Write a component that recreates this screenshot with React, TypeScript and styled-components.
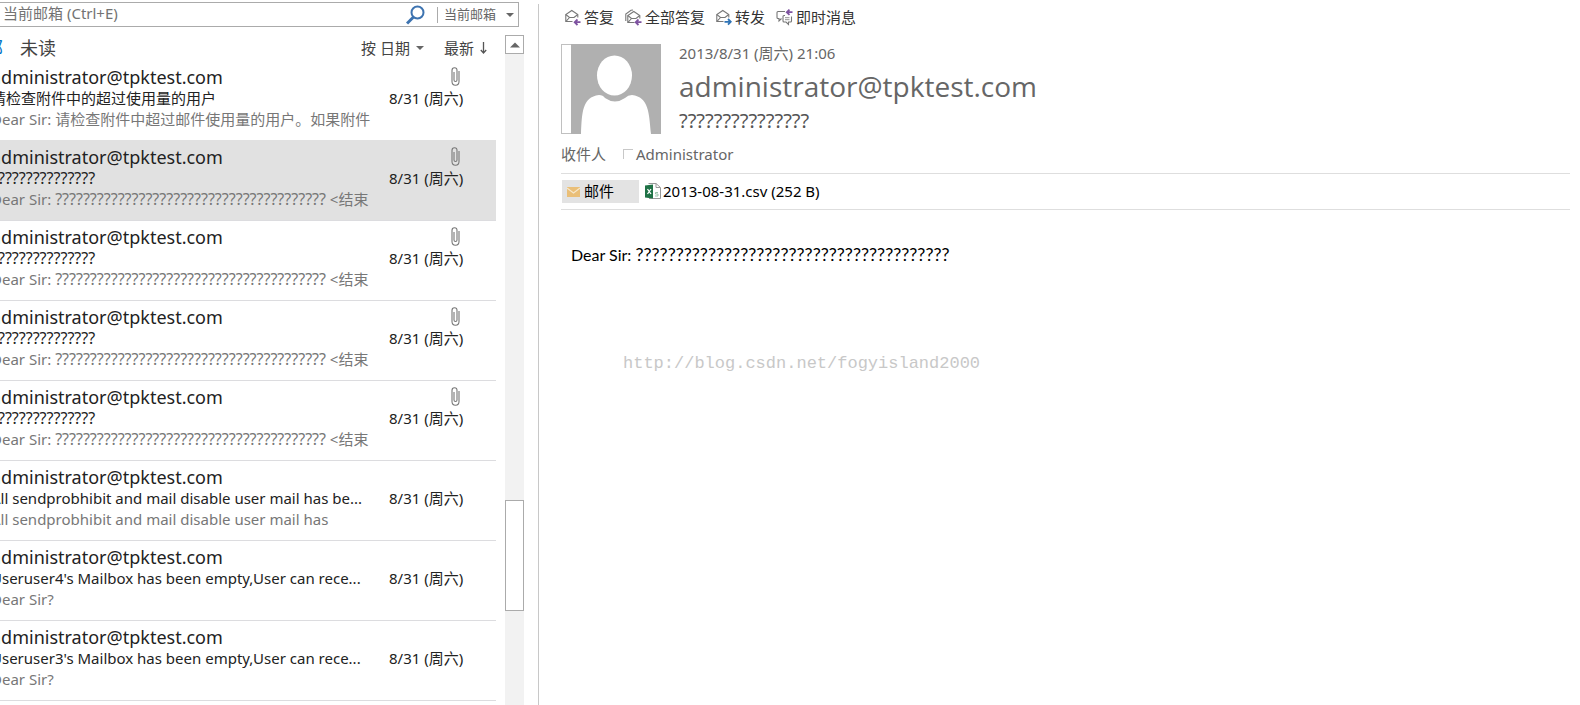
import React from "react";
import styled, { createGlobalStyle } from "styled-components";

const Global = createGlobalStyle`
  * { box-sizing: border-box; }
  html, body, #root { height: 100%; }
  body {
    margin: 0;
    background: #fff;
    color: #222;
    font: 15px/21px "Noto Sans", "Noto Sans CJK SC", sans-serif;
  }
  button, input, select { font: inherit; color: inherit; margin: 0; }
`;

const Page = styled.div`
  display: grid;
  grid-template-columns: 538px 1fr;
  height: 100vh;
  overflow: hidden;
`;

const ListPane = styled.section`
  display: flex;
  flex-direction: column;
  min-width: 0;
  min-height: 0;
`;

const SearchBar = styled.form`
  display: flex;
  align-items: center;
  height: 25px;
  margin: 2px 19px 0 0;
  border: 1px solid #ababab;
  border-left: 0;
`;

const SearchInput = styled.input`
  flex: 1;
  min-width: 0;
  height: 23px;
  padding: 0 0 4px 3px;
  border: 0;
  outline: 0;
  background: none;
  font-size: 15px;
  &::placeholder { color: #737373; opacity: 1; }
`;

const PlainButton = styled.button`
  display: flex;
  align-items: center;
  padding: 0;
  border: 0;
  background: none;
  white-space: nowrap;
`;

const Scope = styled.label`
  display: flex;
  align-items: center;
  margin-left: 12px;
  padding: 0 4px 0 6px;
  border-left: 1px solid #ababab;
  line-height: 16px;
  color: #666;
`;

const ScopeSelect = styled.select`
  appearance: none;
  width: 62px;
  height: 16px;
  padding: 0 0 2px;
  border: 0;
  background: none;
  font-size: 13px;
  line-height: 14px;
`;

const ListBody = styled.div`
  display: flex;
  flex: 1;
  min-height: 0;
  margin-top: 8px;
`;

const ListColumn = styled.div`
  flex: 1;
  min-width: 0;
`;

const Filters = styled.div`
  display: flex;
  align-items: center;
  height: 26px;
  padding-right: 18px;
  color: #444;
`;

const FilterTab = styled.button<{ $active?: boolean }>`
  padding: 0;
  border: 0;
  background: none;
  font-size: 18px;
  white-space: nowrap;
  color: ${(p) => (p.$active ? "#0072c6" : "#444")};
  margin-left: ${(p) => (p.$active ? "-33px" : "17px")};
`;

const SortGroup = styled.div`
  display: flex;
  gap: 20px;
  margin-left: auto;
  svg { margin-left: 6px; }
`;

const Messages = styled.ul`
  margin: 0 9px 0 0;
  padding: 0;
  list-style: none;
`;

const Message = styled.li<{ $selected?: boolean }>`
  display: grid;
  grid-template-columns: 389px 1fr;
  height: 80px;
  padding-top: 5px;
  border-top: 1px solid ${(p) => (p.$selected ? "#e1e1e1" : "#dcdcdf")};
  background: ${(p) => (p.$selected ? "#e1e1e1" : "#fff")};
  &:first-child { height: 79px; padding-top: 4px; border-color: transparent; }
  &:last-child { height: 81px; border-bottom: 1px solid #dcdcdf; }
`;

const MessageText = styled.div`
  width: 389px;
  padding-right: 14px;
  overflow: hidden;
`;

const Line = styled.div<{ $kind: "sender" | "subject" | "preview" }>`
  margin-left: -9px;
  font-size: ${(p) => (p.$kind === "sender" ? "18px" : "15px")};
  line-height: ${(p) => (p.$kind === "sender" ? "22px" : "21px")};
  color: ${(p) => (p.$kind === "preview" ? "#777" : "#222")};
  white-space: nowrap;
`;

const Marks = styled.span<{ $size: number }>`
  font-size: ${(p) => p.$size}px;
`;

const MessageMeta = styled.div`
  display: grid;
  grid-template-rows: 22px 21px;
  width: 77px;
  white-space: nowrap;
  svg { justify-self: end; margin: 1px 6px 0 0; }
  time { grid-row: 2; }
`;

const Scroll = styled.div`
  display: flex;
  flex-direction: column;
  width: 19px;
  margin-right: 14px;
  background: #f2f2f2;
`;

const ScrollButton = styled.button`
  display: flex;
  align-items: center;
  justify-content: center;
  height: 19px;
  padding: 0;
  border: 1px solid #ababab;
  background: #fff;
`;

const ScrollTrack = styled.div`
  flex: 1;
  display: grid;
  grid-template-rows: 446fr 111fr 94fr;
`;

const Thumb = styled.div`
  grid-row: 2;
  border: 1px solid #ababab;
  background: #fff;
`;

const Reading = styled.main`
  min-width: 0;
  margin-top: 4px;
  padding: 3px 10px 0 22px;
  border-left: 1px solid #c8c8c8;
`;

const Actions = styled.nav`
  display: flex;
  gap: 11px;
  height: 21px;
  padding-left: 4px;
  color: #333;
  svg { margin-right: 3px; }
`;

const Header = styled.header`
  display: flex;
  gap: 18px;
  height: 90px;
  margin-top: 16px;
  color: #666;
`;

const Avatar = styled.div`
  width: 100px;
  height: 90px;
  padding-left: 9px;
  border: 1px solid #c0c0c0;
  border-right: 0;
  svg { display: block; margin-top: -1px; }
`;

const HeaderText = styled.div`
  min-width: 0;
  time { display: block; line-height: 19px; }
`;

const From = styled.h1`
  margin: 3px 0 0;
  font-family: "Open Sans", sans-serif;
  font-size: 28px;
  font-weight: 400;
  line-height: 40px;
`;

const Subject = styled.h2`
  margin: 3px 0 0;
  font-size: 20px;
  font-weight: 400;
  line-height: 24px;
  color: #555;
`;

const Recipients = styled.div`
  display: flex;
  gap: 17px;
  height: 39px;
  padding-top: 10px;
  color: #666;
`;

const Recipient = styled.span`
  display: flex;
  gap: 3px;
`;

const Presence = styled.i`
  width: 10px;
  height: 10px;
  margin-top: 5px;
  border: 1px solid #c8c8c8;
  border-right: 0;
  border-bottom: 0;
`;

const Attachments = styled.div`
  display: flex;
  align-items: center;
  gap: 6px;
  height: 37px;
  padding-left: 1px;
  border: 1px solid #dedede;
  border-width: 1px 0;
  color: #000;
`;

const AttachmentTab = styled(PlainButton)<{ $active?: boolean }>`
  gap: ${(p) => (p.$active ? "4px" : "2px")};
  width: ${(p) => (p.$active ? "77px" : "auto")};
  height: 23px;
  padding-left: ${(p) => (p.$active ? "5px" : "0")};
  background: ${(p) => (p.$active ? "#e3e3e3" : "none")};
`;

const Body = styled.article`
  padding: 34px 10px 0;
  color: #000;
`;

const BodyText = styled.p`
  margin: 0;
  font-family: Lato, "Noto Sans CJK SC", sans-serif;
  font-size: 16px;
`;

const Watermark = styled.p`
  margin: 87px 0 0 52px;
  font-family: "Liberation Mono", monospace;
  font-size: 17px;
  line-height: 24px;
  color: #c8c8c8;
`;

const Caret = ({ up }: { up?: boolean }) => (
  <svg width={up ? 10 : 8} height={up ? 6 : 4} viewBox="0 0 8 4" aria-hidden="true">
    <path d={up ? "M0 4L4 0L8 4Z" : "M0 0H8L4 4Z"} fill="#666" />
  </svg>
);

const SearchIcon = () => (
  <svg width="19" height="20" viewBox="0 0 19 20" fill="none" stroke="#3d73b0" aria-hidden="true">
    <circle cx="11.5" cy="7.5" r="6" strokeWidth="2" />
    <path d="M7.5 12L1 18.5" strokeWidth="3" />
  </svg>
);

const DownArrow = () => (
  <svg width="7" height="12" viewBox="0 0 7 12" fill="none" stroke="#555" aria-hidden="true">
    <path d="M3.5 0V11M.8 8L3.5 11L6.2 8" strokeWidth="1.3" />
  </svg>
);

const Clip = () => (
  <svg width="9" height="19" viewBox="0 0 9 19" fill="none" stroke="#777" strokeWidth="1.1" aria-hidden="true">
    <path d="M3 5V13Q3 14.500 4.500 14.500T6 13V3.500Q6 .8 3.500 .8T1 3.500V14.500Q1 18.200 4.500 18.200T8 14.500V4" />
  </svg>
);

type IconKind = "reply" | "replyAll" | "forward" | "im";

const ActionIcon = ({ kind }: { kind: IconKind }) => {
  const wide = kind === "replyAll" || kind === "im";
  return (
    <svg width={wide ? 17 : 16} height="17" viewBox={wide ? "0 0 17 17" : "0 0 16 17"} fill="none" aria-hidden="true">
      {kind === "im" ? (
        <>
          <path d="M9 2.500H2Q1 2.500 1 3.500V8.500Q1 9.500 2 9.500H3V12L5.500 9.500" stroke="#777" strokeWidth="1.1" />
          <path d="M9 6.500H8Q7 6.500 7 7.500V12Q7 13 8 13H10L12.500 15.500V13H14.500Q15.500 13 15.500 12V7.500" stroke="#777" strokeWidth="1.1" />
          <path d="M9 8.700H13.500M9 10.700H13.500" stroke="#888" strokeWidth=".9" />
          <path d="M16.500 3.200H11M13.500 .6L10.800 3.200L13.500 5.800" stroke="#7e52a0" strokeWidth="1.8" />
        </>
      ) : (
        <>
          {kind === "replyAll" && <path d="M.8 12V5L6 1.200L8 1" stroke="#777" strokeWidth="1.1" />}
          <g transform={kind === "replyAll" ? "translate(2 1)" : undefined} stroke="#777" strokeWidth="1.1">
            <path d="M7.500 12.500H.8V5.500L6.800 1.500L12.800 5.500V8.500" />
            <path d="M.8 5.500L4.500 8.500H9L12.800 5.500M1 12.300L4.500 8.500" />
          </g>
          {kind === "forward" ? (
            <path d="M8.500 12.800H14.500M12 10L14.800 12.800L12 15.600" stroke="#2f73b5" strokeWidth="1.8" />
          ) : (
            <path d={kind === "replyAll" ? "M16.500 13.200H11M13.500 10.500L10.700 13.200L13.500 16" : "M15.500 13.200H10M12.500 10.500L9.700 13.200L12.500 16"} stroke="#7e52a0" strokeWidth="1.8" />
          )}
        </>
      )}
    </svg>
  );
};

const Person = () => (
  <svg width="90" height="90" viewBox="0 0 90 90" aria-label="发件人头像" role="img">
    <path d="M0 0H90V90H0Z" fill="#b0b0b0" />
    <ellipse cx="43.500" cy="31.500" rx="17.500" ry="20" fill="#fff" />
    <path d="M10 90C11 69 11 53 28 51Q32 51 34 54Q44 61 54 54Q57 51 61 51C78 53 78 69 80 90Z" fill="#fff" />
  </svg>
);

const Envelope = () => (
  <svg width="13" height="10" viewBox="0 0 13 10" aria-hidden="true">
    <path d="M0 0H13V10H0Z" fill="#eabf78" />
    <path d="M0 1L6.500 6L13 1" fill="none" stroke="#f7e8cc" strokeWidth="1.2" />
  </svg>
);

const Excel = () => (
  <svg width="16" height="17" viewBox="0 0 16 17" fill="none" aria-hidden="true">
    <path d="M3.500 .5H11L15.500 4.500V15.500H4M11 .5V4.500H15" stroke="#999" />
    <path d="M0 2.500L8 1.500V15.500L0 14.500Z" fill="#1f7246" />
    <path d="M2.500 6L6 11M6 6L2.500 11" stroke="#fff" strokeWidth="1.3" />
    <path d="M13 9.500H10.500V11H13V13H10" stroke="#9bc3ab" />
  </svg>
);

const marks = (n: number) => "?".repeat(n);
const sender = "administrator@tpktest.com";

interface Mail {
  subject: React.ReactNode;
  preview: React.ReactNode;
  clip?: boolean;
  selected?: boolean;
}

const flagged: Mail = {
  subject: <Marks $size={16}>{marks(15)}</Marks>,
  preview: <>Dear Sir: <Marks $size={16}>{marks(39)}</Marks> &lt;结束</>,
  clip: true,
};

const messages: Mail[] = [
  { subject: "请检查附件中的超过使用量的用户", preview: "Dear Sir: 请检查附件中超过邮件使用量的用户。如果附件", clip: true },
  { ...flagged, selected: true },
  flagged,
  flagged,
  flagged,
  { subject: "All sendprobhibit and mail disable user mail has be...", preview: "All sendprobhibit and mail disable user mail has" },
  { subject: "Useruser4's Mailbox has been empty,User can rece...", preview: "Dear Sir?" },
  { subject: "Useruser3's Mailbox has been empty,User can rece...", preview: "Dear Sir?" },
];

const actions: [IconKind, string][] = [
  ["reply", "答复"],
  ["replyAll", "全部答复"],
  ["forward", "转发"],
  ["im", "即时消息"],
];

export default function App() {
  return (
    <>
      <Global />
      <Page>
        <ListPane>
          <SearchBar>
            <SearchInput aria-label="搜索" placeholder="当前邮箱 (Ctrl+E)" />
            <PlainButton type="button" aria-label="搜索"><SearchIcon /></PlainButton>
            <Scope>
              <ScopeSelect aria-label="搜索范围"><option>当前邮箱</option></ScopeSelect>
              <Caret />
            </Scope>
          </SearchBar>
          <ListBody>
            <ListColumn>
              <Filters>
                <FilterTab $active>全部</FilterTab>
                <FilterTab>未读</FilterTab>
                <SortGroup>
                  <PlainButton>按 日期<Caret /></PlainButton>
                  <PlainButton>最新<DownArrow /></PlainButton>
                </SortGroup>
              </Filters>
              <Messages>
                {messages.map((m, i) => (
                  <Message key={i} $selected={m.selected}>
                    <MessageText>
                      <Line $kind="sender">{sender}</Line>
                      <Line $kind="subject">{m.subject}</Line>
                      <Line $kind="preview">{m.preview}</Line>
                    </MessageText>
                    <MessageMeta>
                      {m.clip && <Clip />}
                      <time>8/31 (周六)</time>
                    </MessageMeta>
                  </Message>
                ))}
              </Messages>
            </ListColumn>
            <Scroll>
              <ScrollButton aria-label="向上滚动"><Caret up /></ScrollButton>
              <ScrollTrack><Thumb /></ScrollTrack>
            </Scroll>
          </ListBody>
        </ListPane>
        <Reading>
          <Actions>
            {actions.map(([kind, label]) => (
              <PlainButton key={kind}><ActionIcon kind={kind} />{label}</PlainButton>
            ))}
          </Actions>
          <Header>
            <Avatar><Person /></Avatar>
            <HeaderText>
              <time>2013/8/31 (周六) 21:06</time>
              <From>{sender}</From>
              <Subject>{marks(15)}</Subject>
            </HeaderText>
          </Header>
          <Recipients>
            <span>收件人</span>
            <Recipient><Presence />Administrator</Recipient>
          </Recipients>
          <Attachments>
            <AttachmentTab $active><Envelope />邮件</AttachmentTab>
            <AttachmentTab><Excel />2013-08-31.csv (252 B)</AttachmentTab>
          </Attachments>
          <Body>
            <BodyText>Dear Sir: <Marks $size={18}>{marks(39)}</Marks></BodyText>
            <Watermark>http://blog.csdn.net/fogyisland2000</Watermark>
          </Body>
        </Reading>
      </Page>
    </>
  );
}
